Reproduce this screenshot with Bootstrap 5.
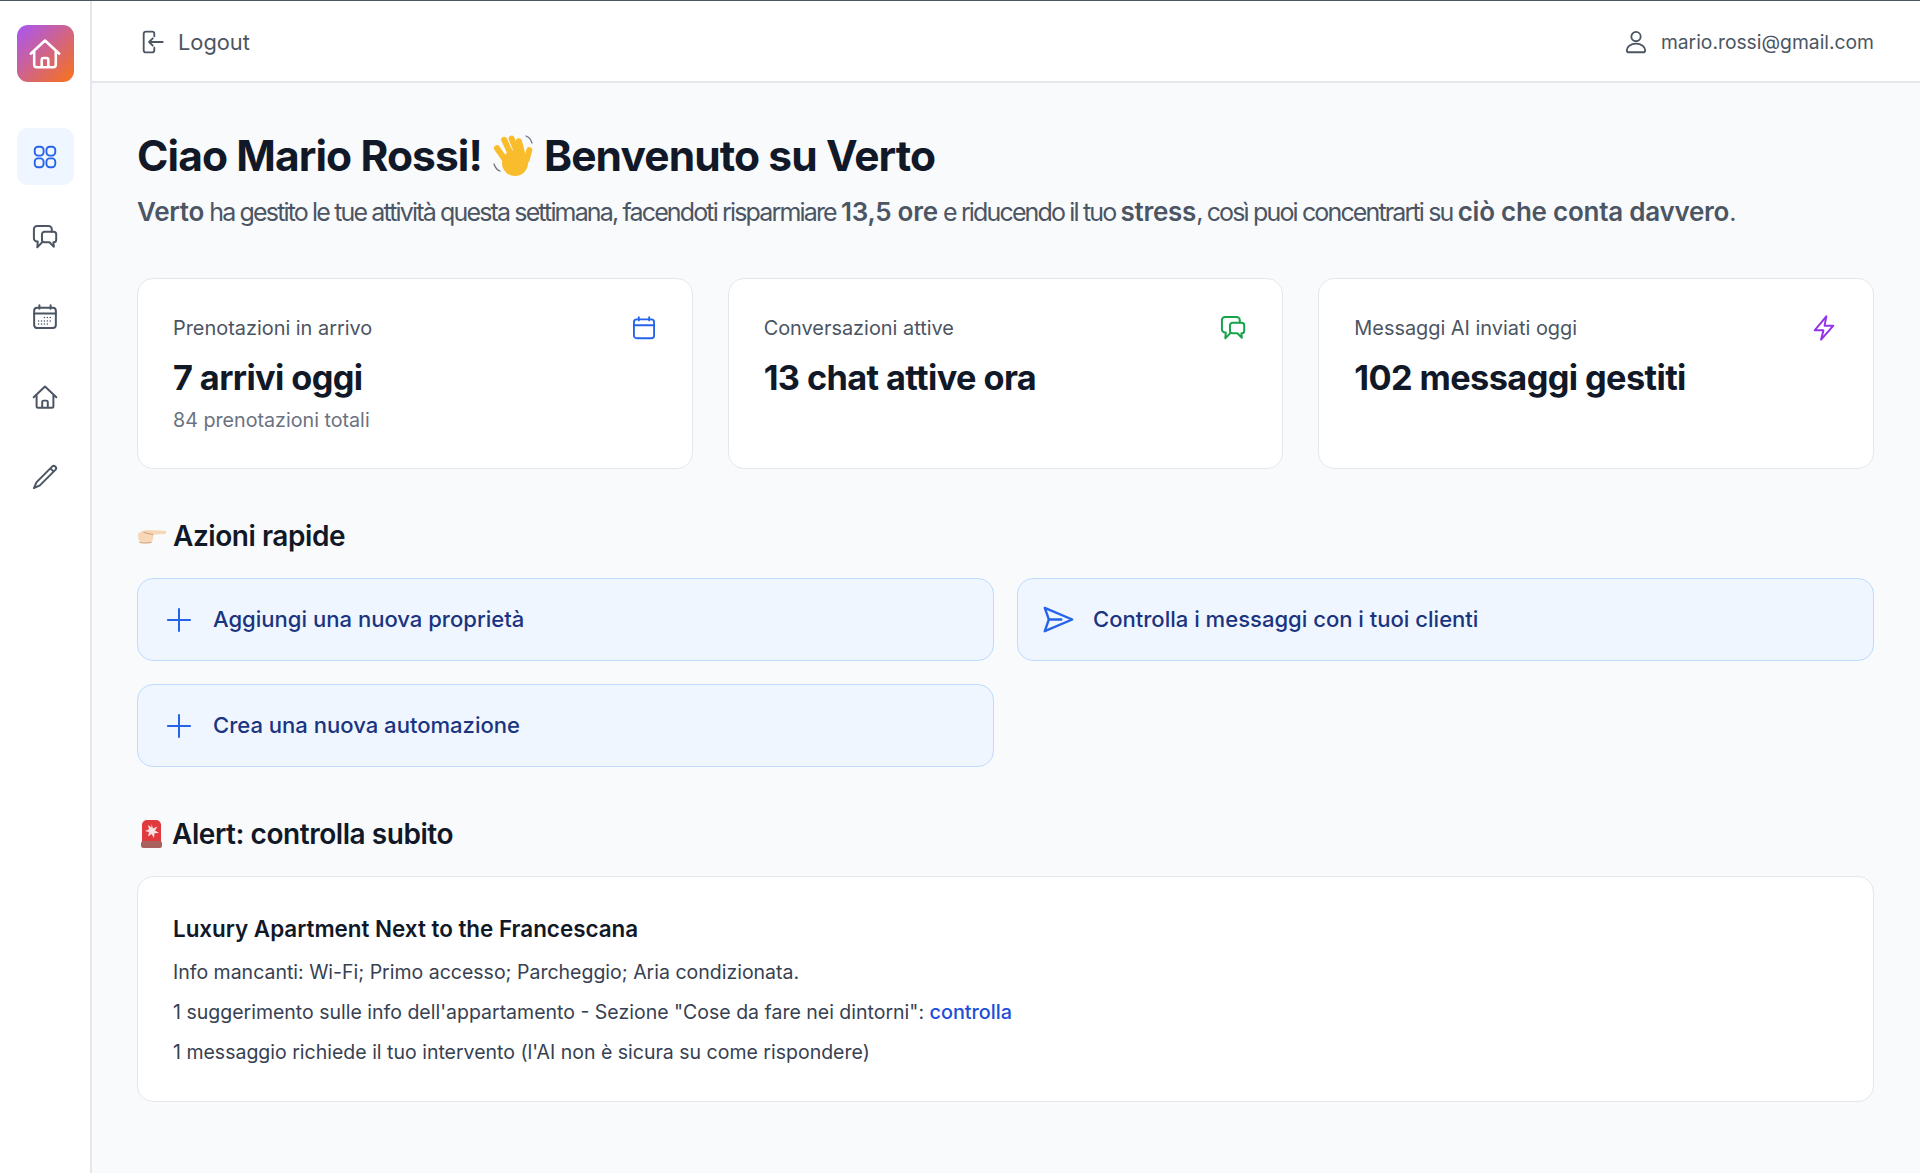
<!DOCTYPE html>
<html lang="it">
<head>
  <meta charset="UTF-8">
  <title>Verto - Dashboard</title>
  <link rel="stylesheet" href="https://cdn.jsdelivr.net/npm/bootstrap@5.3.0/dist/css/bootstrap.min.css">
  <style>
    body { font-family: Inter, "Liberation Sans", sans-serif; background: #f9fafb; color: #111827; border-top: 1px solid #4b5563; height: 1173px; overflow: hidden; }
    svg { display: block; fill: none; stroke: currentColor; stroke-width: 1.7; stroke-linecap: round; stroke-linejoin: round; }
    .app-side { width: 92px; flex: none; background: #fff; border-right: 2px solid #e5e7eb; padding-top: 24px; height: 1172px; }
    .app-logo { width: 57px; height: 57px; border-radius: 11px; background: linear-gradient(135deg, #a855f7, #f97316); color: #fff; margin-bottom: 46px; }
    .side-btn { width: 57px; height: 57px; border-radius: 11px; color: #4b5563; margin-bottom: 23px; }
    .side-btn.active-btn { background: #eff6ff; color: #2563eb; }
    .app-top { height: 82px; background: #fff; border-bottom: 2px solid #e5e7eb; padding: 2px 46px 0 48px; color: #4b5563; }
    .logout-txt { font-size: 21.8px; margin-left: 12px; }
    .user-txt { font-size: 19.3px; margin-left: 12px; }
    .app-main { padding: 45px 46px 0 45px; }
    .hello-title { font-size: 42.5px; font-weight: 700; letter-spacing: -0.9px; line-height: 56px; margin: 0 0 10px; display: flex; align-items: center; }
    .hello-ico { margin: 0 6px 0 10px; stroke: none; }
    .hello-sub { font-size: 25px; letter-spacing: -1.85px; color: #4b5563; line-height: 36px; margin: 0 0 48px; white-space: nowrap; }
    .hello-sub b { font-size: 26px; font-weight: 600; letter-spacing: -0.25px; }
    .stat-row { display: grid; grid-template-columns: repeat(3, 1fr); gap: 35px; margin-bottom: 47px; }
    .stat-box { height: 191px; background: #fff; border: 1.5px solid #e5e7eb; border-radius: 16px; padding: 35px; }
    .stat-label { font-size: 19.9px; color: #4b5563; line-height: 28px; }
    .stat-val { font-size: 34.3px; font-weight: 700; letter-spacing: -0.6px; line-height: 44px; margin-top: 14px; }
    .stat-note { font-size: 19.7px; color: #6b7280; line-height: 28px; margin-top: 6px; }
    .sec-title { font-size: 28px; font-weight: 600; letter-spacing: -0.45px; line-height: 40px; margin: 0 0 22px; display: flex; align-items: center; }
    .sec-title svg { margin-right: 6px; stroke: none; }
    .act-grid { display: grid; grid-template-columns: repeat(2, 1fr); gap: 23px; margin-bottom: 47px; }
    .act-btn { height: 83px; background: #eff6ff; border: 1.5px solid #bfdbfe; border-radius: 16px; padding: 0 27px; color: #1a347f; font-size: 22.05px; font-weight: 500; text-decoration: none; }
    .act-btn svg { color: #2563eb; margin-right: 20px; }
    .act-btn svg.send-ico { margin-left: -3px; margin-right: 18px; }
    .alert-box { background: #fff; border: 1.5px solid #e5e7eb; border-radius: 16px; padding: 36px 35px; height: 226px; }
    .alert-name { font-size: 22.4px; font-weight: 600; line-height: 32px; margin: 0 0 7px; }
    .alert-line { font-size: 19.5px; color: #374151; line-height: 40px; margin: 0; }
    .alert-line a { color: #1d4ed8; font-weight: 500; font-size: 19.8px; text-decoration: none; }
  </style>
</head>
<body>
  <div class="d-flex">
    <!-- sidebar -->
    <aside class="app-side d-flex flex-column align-items-center">
      <div class="app-logo d-flex align-items-center justify-content-center">
        <svg width="36" height="36" viewBox="0 0 24 24" stroke-width="1.500"><path d="M2.500 11.800 12 3l9.500 8.800M4.800 10v9.200a1.600 1.600 0 0 0 1.600 1.600h11.200a1.600 1.600 0 0 0 1.600-1.600V10M9.800 20.800v-5a1.200 1.200 0 0 1 1.200-1.200h2a1.200 1.200 0 0 1 1.200 1.200v5"/></svg>
      </div>
      <a class="side-btn active-btn d-flex align-items-center justify-content-center">
        <svg width="26" height="26" viewBox="0 0 24 24"><rect x="2.500" y="2.500" width="8.200" height="8.200" rx="3"/><rect x="13.300" y="2.500" width="8.200" height="8.200" rx="3"/><rect x="2.500" y="13.300" width="8.200" height="8.200" rx="3"/><rect x="13.300" y="13.300" width="8.200" height="8.200" rx="3"/></svg>
      </a>
      <a class="side-btn d-flex align-items-center justify-content-center">
        <svg width="28" height="28" viewBox="0 0 24 24" stroke-width="1.500"><path d="M17.800 7.500V5.200a2.700 2.700 0 0 0-2.700-2.700H5.200a2.700 2.700 0 0 0-2.700 2.700v8a2.700 2.700 0 0 0 2.700 2.700h.6l-.4 5 4.400-4.600"/><path d="M11.600 7.500h7.800a2.200 2.200 0 0 1 2.200 2.200v4.600a2.200 2.200 0 0 1-2.200 2.200h-.2l.4 3.800-3.800-3.800h-4.200a2.200 2.200 0 0 1-2.200-2.200V9.700a2.200 2.200 0 0 1 2.200-2.200z"/></svg>
      </a>
      <a class="side-btn d-flex align-items-center justify-content-center">
        <svg width="28" height="28" viewBox="0 0 24 24" stroke-width="1.500"><rect x="2.700" y="4" width="18.600" height="17.500" rx="2.600"/><path d="M2.700 9h18.600M7.200 2v3M16.800 2v3"/><path d="M6.500 15.500h.01M9 15.500h.01M11.500 15.500h.01M14 15.500h.01M16.500 15.500h.01M11.500 12.500h.01M14 12.500h.01M16.500 12.500h.01M6.500 18h.01M9 18h.01M11.500 18h.01M14 18h.01" stroke-width="1.300"/></svg>
      </a>
      <a class="side-btn d-flex align-items-center justify-content-center">
        <svg width="28" height="28" viewBox="0 0 24 24" stroke-width="1.500"><path d="M2.300 12.200 12 3l9.700 9.200M4.800 10v10a1.300 1.300 0 0 0 1.300 1.300h11.800a1.300 1.300 0 0 0 1.300-1.300V10M9.600 21.300v-5a1.200 1.200 0 0 1 1.200-1.200h2.400a1.200 1.200 0 0 1 1.200 1.200v5"/></svg>
      </a>
      <a class="side-btn d-flex align-items-center justify-content-center">
        <svg width="28" height="28" viewBox="0 0 24 24" stroke-width="1.500"><path d="M18.300 2.900a2 2 0 0 1 2.800 2.800L7.600 19.200 2.500 21.500l2.300-5.100zM16.600 4.600l2.800 2.800"/></svg>
      </a>
    </aside>

    <div class="flex-grow-1">
      <!-- top bar -->
      <header class="app-top d-flex align-items-center justify-content-between">
        <div class="d-flex align-items-center">
          <svg width="26" height="26" viewBox="0 0 24 24" stroke-width="1.500"><path d="M13.200 6.800V4.400a2 2 0 0 0-2-2H5.400a2 2 0 0 0-2 2v15.200a2 2 0 0 0 2 2h5.800a2 2 0 0 0 2-2v-2.400"/><path d="M21 12H8.500M11.800 8.600 8.400 12l3.400 3.400"/></svg>
          <span class="logout-txt">Logout</span>
        </div>
        <div class="d-flex align-items-center">
          <svg width="26" height="26" viewBox="0 0 24 24" stroke-width="1.500"><circle cx="12" cy="7" r="4.300"/><path d="M12 13.500c-5 0-8.500 3-8.500 6 0 1.200.9 2 2 2h13c1.100 0 2-.8 2-2 0-3-3.500-6-8.500-6z"/></svg>
          <span class="user-txt">mario.rossi@gmail.com</span>
        </div>
      </header>

      <main class="app-main">
        <h1 class="hello-title">Ciao Mario Rossi!
          <svg class="hello-ico" width="46" height="46" viewBox="0 0 46 46">
            <g fill="#f9bc2c"><rect x="13" y="3" width="6" height="24" rx="3" transform="rotate(-25 16 15)"/><rect x="20" y="2" width="6" height="24" rx="3" transform="rotate(-22 23 14)"/><rect x="26" y="5" width="6" height="22" rx="3" transform="rotate(-15 29 16)"/><rect x="6" y="11" width="6" height="20" rx="3" transform="rotate(-35 9 21)"/><rect x="33" y="14" width="6" height="16" rx="3" transform="rotate(15 36 22)"/><ellipse cx="23" cy="30" rx="13" ry="13"/></g>
            <path d="M34 3c3 1 5 4 6 7M2 31c1 3 3 6 6 7" fill="none" stroke="#6b7280" stroke-width="1.300"/>
          </svg>Benvenuto su Verto</h1>
        <p class="hello-sub"><b>Verto</b> ha gestito le tue attività questa settimana, facendoti risparmiare <b>13,5 ore</b> e riducendo il tuo <b>stress</b>, così puoi concentrarti su <b>ciò che conta davvero</b>.</p>

        <div class="stat-row">
          <div class="stat-box">
            <div class="d-flex justify-content-between align-items-center">
              <span class="stat-label">Prenotazioni in arrivo</span>
              <svg width="26" height="26" viewBox="0 0 24 24" stroke-width="1.500" style="color:#2563eb"><rect x="2.700" y="4" width="18.600" height="17.500" rx="2.600"/><path d="M2.700 9.500h18.600M7.200 2v3M16.800 2v3"/></svg>
            </div>
            <div class="stat-val">7 arrivi oggi</div>
            <div class="stat-note">84 prenotazioni totali</div>
          </div>
          <div class="stat-box">
            <div class="d-flex justify-content-between align-items-center">
              <span class="stat-label">Conversazioni attive</span>
              <svg width="28" height="28" viewBox="0 0 24 24" stroke-width="1.500" style="color:#16a34a"><path d="M17.800 7.500V5.200a2.700 2.700 0 0 0-2.700-2.700H5.200a2.700 2.700 0 0 0-2.700 2.700v8a2.700 2.700 0 0 0 2.700 2.700h.6l-.4 5 4.400-4.600"/><path d="M11.600 7.500h7.800a2.200 2.200 0 0 1 2.200 2.200v4.600a2.200 2.200 0 0 1-2.200 2.200h-.2l.4 3.800-3.800-3.800h-4.200a2.200 2.200 0 0 1-2.200-2.200V9.700a2.200 2.200 0 0 1 2.200-2.200z"/></svg>
            </div>
            <div class="stat-val">13 chat attive ora</div>
          </div>
          <div class="stat-box">
            <div class="d-flex justify-content-between align-items-center">
              <span class="stat-label">Messaggi AI inviati oggi</span>
              <svg width="28" height="28" viewBox="0 0 24 24" stroke-width="1.500" style="color:#9333ea"><path d="M14 2 4 14h7.500L9.500 22 20 10h-7.500z"/></svg>
            </div>
            <div class="stat-val">102 messaggi gestiti</div>
          </div>
        </div>

        <h2 class="sec-title">
          <svg width="30" height="22" viewBox="0 0 30 22"><path d="M1 9c3-3 7-4.500 10-4l17 .8c1.600.2 1.600 3 0 3.200l-12 .6c.8 3 .2 6.400-2 8.400H5C2 18 1 13 1 9z" fill="#f6d7b8"/><path d="M7 7.500 16 9.600M3 17.500c3 .8 7 .8 11 0" stroke="#cf9f74" stroke-width="1" fill="none"/></svg>
          Azioni rapide</h2>
        <div class="act-grid">
          <a class="act-btn d-flex align-items-center">
            <svg width="28" height="28" viewBox="0 0 24 24" stroke-width="1.800"><path d="M12 2.500v19M2.500 12h19"/></svg>
            Aggiungi una nuova proprietà
          </a>
          <a class="act-btn d-flex align-items-center">
            <svg class="send-ico" width="33" height="33" viewBox="0 0 24 24" stroke-width="1.300"><path d="M2 3.500 22 12 2 20.500 5 12z"/><path d="M5 12h9"/></svg>
            Controlla i messaggi con i tuoi clienti
          </a>
          <a class="act-btn d-flex align-items-center">
            <svg width="28" height="28" viewBox="0 0 24 24" stroke-width="1.800"><path d="M12 2.500v19M2.500 12h19"/></svg>
            Crea una nuova automazione
          </a>
        </div>

        <h2 class="sec-title">
          <svg width="29" height="30" viewBox="0 0 29 30"><path d="M5 6a5 5 0 0 1 5-5h9a5 5 0 0 1 5 5v18H5z" fill="#e0393e"/><rect x="4" y="22" width="21" height="7" rx="2.500" fill="#a8615f"/><path d="M14.500 5l1.500 4.500 4.500-2-2.500 4 4 2.500-4.500.3-.5 4.700-2.500-4-3.500 2.500 1-4.500-4-1 4-1.800-1-4.200 3.500 2.500z" fill="#fde2e2"/></svg>
          Alert: controlla subito</h2>
        <div class="alert-box">
          <h3 class="alert-name">Luxury Apartment Next to the Francescana</h3>
          <p class="alert-line">Info mancanti: Wi-Fi; Primo accesso; Parcheggio; Aria condizionata.</p>
          <p class="alert-line">1 suggerimento sulle info dell'appartamento - Sezione "Cose da fare nei dintorni": <a href="#">controlla</a></p>
          <p class="alert-line">1 messaggio richiede il tuo intervento (l'AI non è sicura su come rispondere)</p>
        </div>
      </main>
    </div>
  </div>
  <script src="https://cdn.jsdelivr.net/npm/bootstrap@5.3.0/dist/js/bootstrap.bundle.min.js"></script>
</body>
</html>
